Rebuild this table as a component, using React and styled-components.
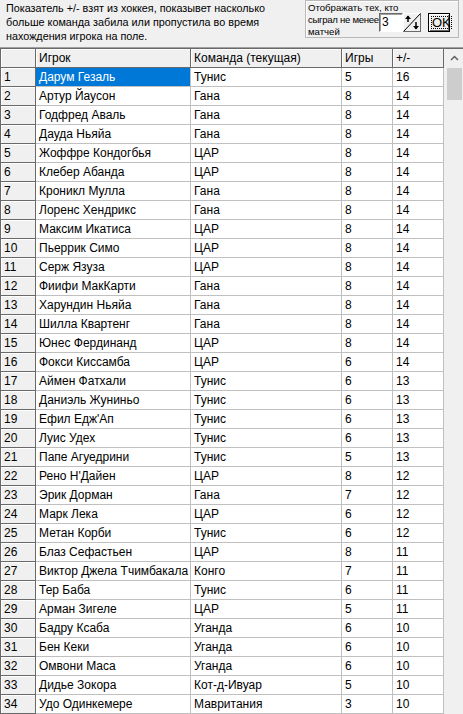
import React from "react";
import styled, { createGlobalStyle } from "styled-components";

const GlobalStyle = createGlobalStyle`
    html, body {
        margin: 0;
        padding: 0;
        background: #f0f0f0;
        overflow: hidden;
    }
    body {
        font-family: "Liberation Sans", Arial, sans-serif;
        font-size: 12px;
        color: #000;
    }
`;

const players = [
    ["Дарум Гезаль", "Тунис", 5, 16],
    ["Артур Йаусон", "Гана", 8, 14],
    ["Годфред Аваль", "Гана", 8, 14],
    ["Дауда Ньяйа", "Гана", 8, 14],
    ["Жоффре Кондогбья", "ЦАР", 8, 14],
    ["Клебер Абанда", "ЦАР", 8, 14],
    ["Кроникл Мулла", "Гана", 8, 14],
    ["Лоренс Хендрикс", "Гана", 8, 14],
    ["Максим Икатиса", "ЦАР", 8, 14],
    ["Пьеррик Симо", "ЦАР", 8, 14],
    ["Серж Язуза", "ЦАР", 8, 14],
    ["Фиифи МакКарти", "Гана", 8, 14],
    ["Харундин Ньяйа", "Гана", 8, 14],
    ["Шилла Квартенг", "Гана", 8, 14],
    ["Юнес Фердинанд", "ЦАР", 8, 14],
    ["Фокси Киссамба", "ЦАР", 6, 14],
    ["Аймен Фатхали", "Тунис", 6, 13],
    ["Даниэль Жуниньо", "Тунис", 6, 13],
    ["Ефил Едж'Ап", "Тунис", 6, 13],
    ["Луис Удех", "Тунис", 6, 13],
    ["Папе Агуедрини", "Тунис", 5, 13],
    ["Рено Н'Дайен", "ЦАР", 8, 12],
    ["Эрик Дорман", "Гана", 7, 12],
    ["Марк Лека", "ЦАР", 6, 12],
    ["Метан Корби", "Тунис", 6, 12],
    ["Блаз Сефастьен", "ЦАР", 8, 11],
    ["Виктор Джела Тчимбакала", "Конго", 7, 11],
    ["Тер Баба", "Тунис", 6, 11],
    ["Арман Зигеле", "ЦАР", 5, 11],
    ["Бадру Ксаба", "Уганда", 6, 10],
    ["Бен Кеки", "Уганда", 6, 10],
    ["Омвони Маса", "Уганда", 6, 10],
    ["Дидье Зокора", "Кот-д-Ивуар", 5, 10],
    ["Удо Одинкемере", "Мавритания", 3, 10],
];

const Window = styled.div`
    width: 463px;
    height: 714px;
    display: flex;
    flex-direction: column;
    overflow: hidden;
`;

const TopPanel = styled.div`
    height: 47px;
    display: flex;
    flex-shrink: 0;
`;

const Info = styled.div`
    padding: 1px 0 0 6px;
    width: 299px;
    font-size: 10.8px;
    line-height: 14px;
    white-space: nowrap;
    span {
        display: block;
    }
`;

const FilterBox = styled.div`
    width: 154px;
    height: 38px;
    box-sizing: border-box;
    border: 1px solid #b9b9b9;
    box-shadow: inset 1px 1px 0 #fff;
    display: flex;
    padding-left: 2px;
`;

const FilterLabel = styled.div`
    width: 71px;
    flex-shrink: 0;
    font-size: 9.6px;
    line-height: 12px;
    padding-top: 1px;
    white-space: nowrap;
    span {
        display: block;
    }
`;

const TightLine = styled.span`
    letter-spacing: -0.3px;
`;

const Controls = styled.div`
    display: flex;
    margin-top: 12px;
    height: 19px;
`;

const NumberBox = styled.div`
    width: 24px;
    height: 19px;
    box-sizing: border-box;
    background: #fff;
    border-top: 1px solid #696969;
    border-left: 1px solid #696969;
    border-right: 1px solid #fff;
    border-bottom: 1px solid #fff;
    box-shadow: inset 1px 1px 0 #a0a0a0;
    font-size: 12px;
    line-height: 17px;
    padding-left: 2px;
`;

const Spin = styled.div`
    width: 18px;
    height: 19px;
    svg {
        display: block;
    }
`;

const OkButton = styled.div`
    margin-left: 7px;
    width: 22px;
    height: 19px;
    box-sizing: border-box;
    border: 1px solid #000;
    box-shadow: inset 1px 1px 0 #fff, inset -1px -1px 0 #696969;
    background: #f0f0f0;
    display: flex;
    padding: 2px;
`;

const OkFocus = styled.div`
    flex: 1;
    border: 1px dotted #000;
    display: flex;
    align-items: center;
    justify-content: center;
    font-size: 13px;
    line-height: 13px;
`;

const GridFrame = styled.div`
    flex: 1;
    display: flex;
    border-top: 1px solid #a0a0a0;
    background: #f0f0f0;
    overflow: hidden;
`;

const GridInner = styled.div`
    flex: 1;
    display: flex;
    border-top: 1px solid #696969;
    border-left: 1px solid #696969;
`;

const Table = styled.div`
    width: 443px;
    display: flex;
    flex-direction: column;
`;

const Row = styled.div`
    display: grid;
    grid-template-columns: 35px 155px 151px 51px 51px;
    height: 19px;
    flex-shrink: 0;
`;

const Cell = styled.div`
    box-sizing: border-box;
    height: 19px;
    padding: 0 3px;
    line-height: 18px;
    white-space: nowrap;
    overflow: hidden;
    border-right: 1px solid ${p => (p.$fixed ? "#696969" : "#c0c0c0")};
    border-bottom: 1px solid ${p => (p.$fixed ? "#696969" : "#c0c0c0")};
    background: ${p => (p.$fixed ? "#f0f0f0" : p.$selected ? "#0078d7" : "#fff")};
    color: ${p => (p.$selected ? "#fff" : "#000")};
    box-shadow: ${p => (p.$fixed ? "inset 1px 1px 0 #fff" : "none")};
`;

const Scrollbar = styled.div`
    width: 17px;
    margin-left: auto;
    display: flex;
    flex-direction: column;
    background: #f0f0f0;
`;

const ScrollArrow = styled.div`
    height: 18px;
    display: flex;
    align-items: center;
    justify-content: center;
`;

const ScrollThumb = styled.div`
    margin: 1px 1px 0 1px;
    height: 32px;
    background: #cdcdcd;
`;

const SpinIcon = () => (
    <svg width="18" height="19" viewBox="0 0 18 19">
        <rect x="0" y="0" width="18" height="19" fill="#f0f0f0" />
        <path d="M0 0.5H17.5M0.5 0V19" stroke="#fff" />
        <path d="M0 18.5H18M17.5 0V19" stroke="#696969" />
        <path d="M1 18L17 1" stroke="#000" />
        <path d="M5 9V3" stroke="#000" strokeWidth="1.5" />
        <path d="M2 6L5 2.5L8 6Z" fill="#000" />
        <path d="M13 9V16" stroke="#000" strokeWidth="1.5" />
        <path d="M10 13L13 16.5L16 13Z" fill="#000" />
    </svg>
);

const ChevronUp = () => (
    <svg width="9" height="6" viewBox="0 0 9 6">
        <path d="M1 5L4.5 1.5L8 5" stroke="#606060" strokeWidth="1.5" fill="none" />
    </svg>
);

const App = () => {
    return (
        <Window>
            <GlobalStyle />
            <TopPanel>
                <Info>
                    <span>Показатель +/- взят из хоккея, показывет насколько</span>
                    <span>больше команда забила или пропустила во время</span>
                    <span>нахождения игрока на поле.</span>
                </Info>
                <FilterBox>
                    <FilterLabel>
                        <span>Отображать тех, кто</span>
                        <TightLine>сыграл не менее</TightLine>
                        <span>матчей</span>
                    </FilterLabel>
                    <Controls>
                        <NumberBox>3</NumberBox>
                        <Spin>
                            <SpinIcon />
                        </Spin>
                        <OkButton>
                            <OkFocus>OK</OkFocus>
                        </OkButton>
                    </Controls>
                </FilterBox>
            </TopPanel>
            <GridFrame>
                <GridInner>
                    <Table>
                        <Row>
                            <Cell $fixed></Cell>
                            <Cell $fixed>Игрок</Cell>
                            <Cell $fixed>Команда (текущая)</Cell>
                            <Cell $fixed>Игры</Cell>
                            <Cell $fixed>+/-</Cell>
                        </Row>
                        {players.map(([name, team, games, pm], i) => (
                            <Row key={i}>
                                <Cell $fixed>{i + 1}</Cell>
                                <Cell $selected={i === 0}>{name}</Cell>
                                <Cell>{team}</Cell>
                                <Cell>{games}</Cell>
                                <Cell>{pm}</Cell>
                            </Row>
                        ))}
                    </Table>
                    <Scrollbar>
                        <ScrollArrow>
                            <ChevronUp />
                        </ScrollArrow>
                        <ScrollThumb />
                    </Scrollbar>
                </GridInner>
            </GridFrame>
        </Window>
    );
};

export default App;
